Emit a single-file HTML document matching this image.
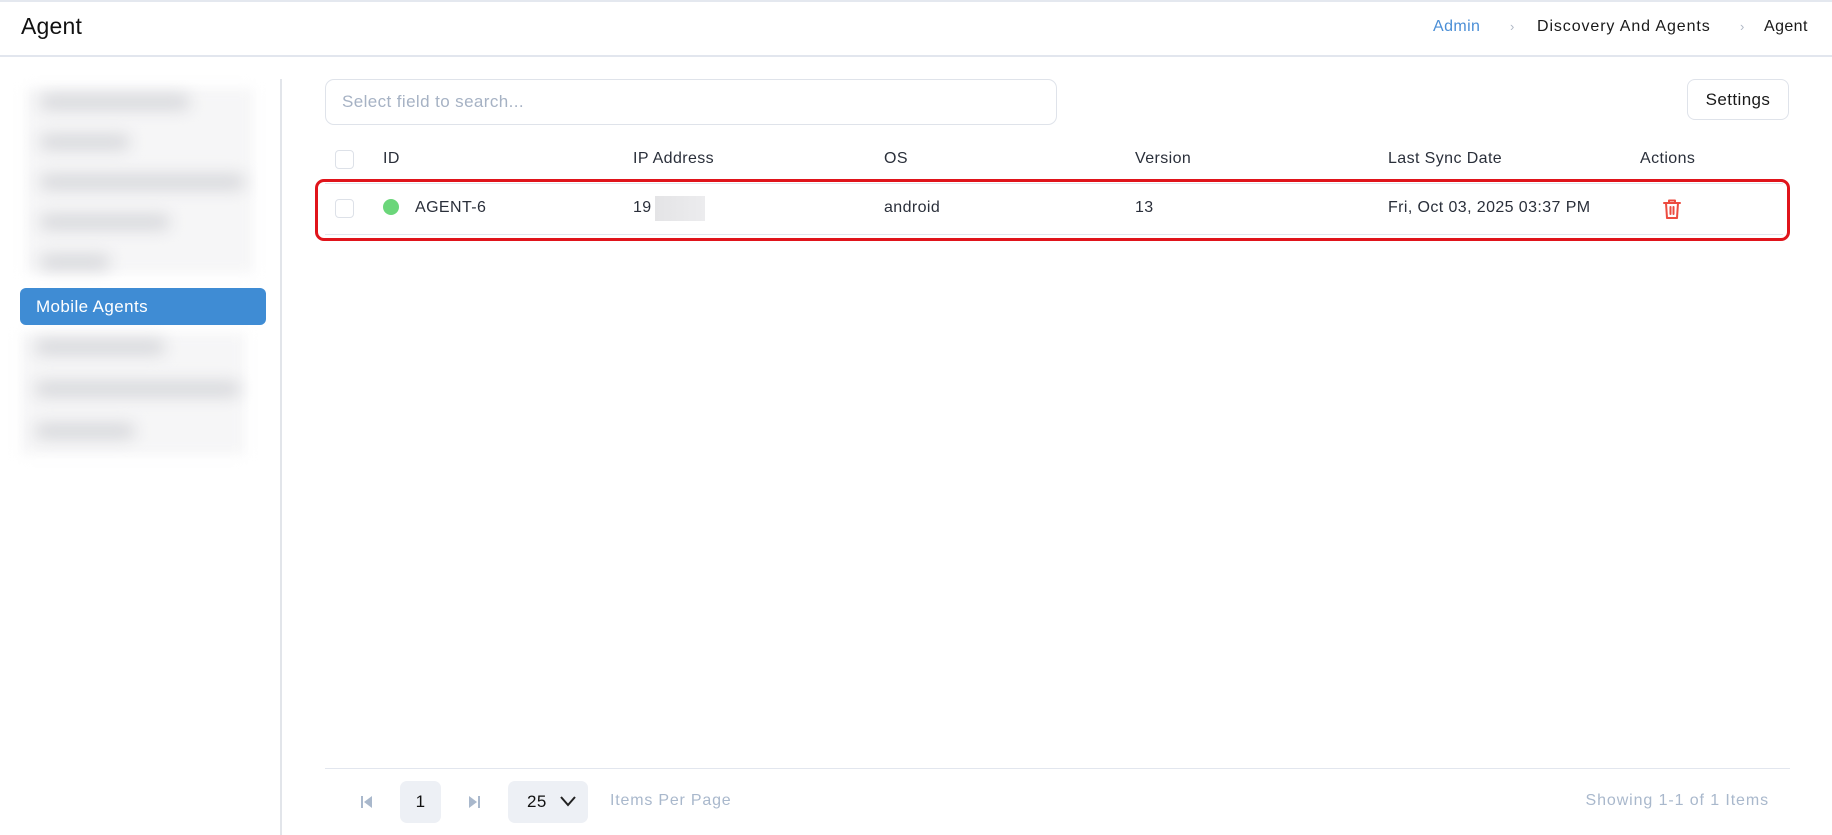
<!DOCTYPE html>
<html><head><meta charset="utf-8"><style>
*{box-sizing:border-box;margin:0;padding:0}
body{width:1832px;height:835px;background:#fff;font-family:"Liberation Sans",sans-serif;color:#222;position:relative;overflow:hidden;letter-spacing:0.4px}
.a{position:absolute;white-space:nowrap}
.blur{position:absolute;background:#d3d4d8;filter:blur(8px);border-radius:8px}
.cb{position:absolute;width:19px;height:19px;border:1px solid #dde1e8;border-radius:4px;background:#fff}
.th{position:absolute;top:150px;font-size:16px;color:#2a2f3a}
.td{position:absolute;top:199px;font-size:16px;color:#2a2f3a}
</style></head><body>
<div class="a" style="left:0;top:0;width:1832px;height:2px;background:#e4e8ef"></div>
<div class="a" style="left:21px;top:13px;font-size:23px;color:#111;letter-spacing:0.2px">Agent</div>
<div class="a" style="left:1433px;top:18px;font-size:16px;color:#4a8ed6">Admin</div>
<div class="a" style="left:1510px;top:19px;font-size:13px;color:#b0b8c6">›</div>
<div class="a" style="left:1537px;top:18px;font-size:16px;color:#1a1a1a;letter-spacing:0.9px">Discovery And Agents</div>
<div class="a" style="left:1740px;top:19px;font-size:13px;color:#b0b8c6">›</div>
<div class="a" style="left:1764px;top:18px;font-size:16px;color:#1a1a1a">Agent</div>
<div class="a" style="left:0;top:55px;width:1832px;height:2px;background:#e2e6ee"></div>

<div class="a" style="left:26px;top:88px;width:227px;height:185px;background:#f6f6f7;filter:blur(6px)"></div>
<div class="blur" style="left:40px;top:95px;width:150px;height:14px"></div>
<div class="blur" style="left:40px;top:135px;width:90px;height:14px"></div>
<div class="blur" style="left:40px;top:175px;width:205px;height:14px"></div>
<div class="blur" style="left:40px;top:215px;width:130px;height:14px"></div>
<div class="blur" style="left:40px;top:255px;width:70px;height:14px"></div>
<div class="a" style="left:21px;top:333px;width:224px;height:122px;background:#f6f6f7;filter:blur(6px)"></div>
<div class="blur" style="left:35px;top:340px;width:130px;height:14px"></div>
<div class="blur" style="left:35px;top:382px;width:205px;height:14px"></div>
<div class="blur" style="left:35px;top:424px;width:100px;height:14px"></div>
<div class="a" style="left:20px;top:288px;width:246px;height:37px;background:#3f8cd4;border-radius:6px;color:#fff;font-size:17px;line-height:37px;padding-left:16px">Mobile Agents</div>
<div class="a" style="left:280px;top:79px;width:2px;height:756px;background:#e2e5ea"></div>

<div class="a" style="left:325px;top:79px;width:732px;height:46px;border:1px solid #dfe3ea;border-radius:9px;font-size:17px;color:#a6b2c4;line-height:44px;padding-left:16px">Select field to search...</div>
<div class="a" style="left:1687px;top:79px;width:102px;height:41px;border:1px solid #dfe3ea;border-radius:8px;font-size:17px;color:#1a1a1a;line-height:39px;text-align:center">Settings</div>

<div class="cb" style="left:335px;top:150px"></div>
<div class="th" style="left:383px">ID</div>
<div class="th" style="left:633px">IP Address</div>
<div class="th" style="left:884px">OS</div>
<div class="th" style="left:1135px">Version</div>
<div class="th" style="left:1388px">Last Sync Date</div>
<div class="th" style="left:1640px">Actions</div>

<div class="a" style="left:325px;top:183px;width:1458px;height:1px;background:#e2e6ee"></div>
<div class="a" style="left:325px;top:234px;width:1458px;height:1px;background:#e2e6ee"></div>
<div class="a" style="left:315px;top:179px;width:1475px;height:62px;border:3px solid #e0141b;border-radius:9px"></div>
<div class="cb" style="left:335px;top:199px"></div>
<div class="a" style="left:383px;top:199px;width:16px;height:16px;border-radius:50%;background:#6bd67a"></div>
<div class="td" style="left:415px">AGENT-6</div>
<div class="td" style="left:633px">19</div>
<div class="a" style="left:655px;top:196px;width:50px;height:25px;background:linear-gradient(90deg,#e4e4e6,#ececee)"></div>
<div class="td" style="left:884px">android</div>
<div class="td" style="left:1135px">13</div>
<div class="td" style="left:1388px">Fri, Oct 03, 2025 03:37 PM</div>
<svg class="a" style="left:1662px;top:198px" width="20" height="22" viewBox="0 0 20 22" fill="none" stroke="#ec4b3f" stroke-width="2" stroke-linecap="round" stroke-linejoin="round"><path d="M2 5h16M7 5V2.5h6V5M4 5l1 15h10l1-15M8.5 9v7M11.5 9v7"/></svg>

<div class="a" style="left:325px;top:768px;width:1465px;height:1px;background:#e2e6ee"></div>
<svg class="a" style="left:360px;top:795px" width="14" height="14" viewBox="0 0 14 14"><rect x="1" y="1" width="2" height="12" fill="#a9b8cc"/><path d="M12 1v12L4 7z" fill="#a9b8cc"/></svg>
<div class="a" style="left:400px;top:781px;width:41px;height:42px;background:#edf0f5;border-radius:7px;font-size:17px;line-height:42px;text-align:center;color:#111">1</div>
<svg class="a" style="left:467px;top:795px" width="14" height="14" viewBox="0 0 14 14"><path d="M2 1v12l8-6z" fill="#a9b8cc"/><rect x="11" y="1" width="2" height="12" fill="#a9b8cc"/></svg>
<div class="a" style="left:508px;top:781px;width:80px;height:42px;background:#edf0f5;border-radius:7px;font-size:17px;line-height:42px;padding-left:19px;color:#111">25</div>
<svg class="a" style="left:560px;top:796px" width="16" height="11" viewBox="0 0 16 11" fill="none" stroke="#222" stroke-width="2"><path d="M1 1l7 8 7-8"/></svg>
<div class="a" style="left:610px;top:792px;font-size:16px;color:#a9b8cc;letter-spacing:0.8px">Items Per Page</div>
<div class="a" style="right:63px;top:792px;font-size:16px;color:#a9b8cc;letter-spacing:0.9px">Showing 1-1 of 1 Items</div>
</body></html>
